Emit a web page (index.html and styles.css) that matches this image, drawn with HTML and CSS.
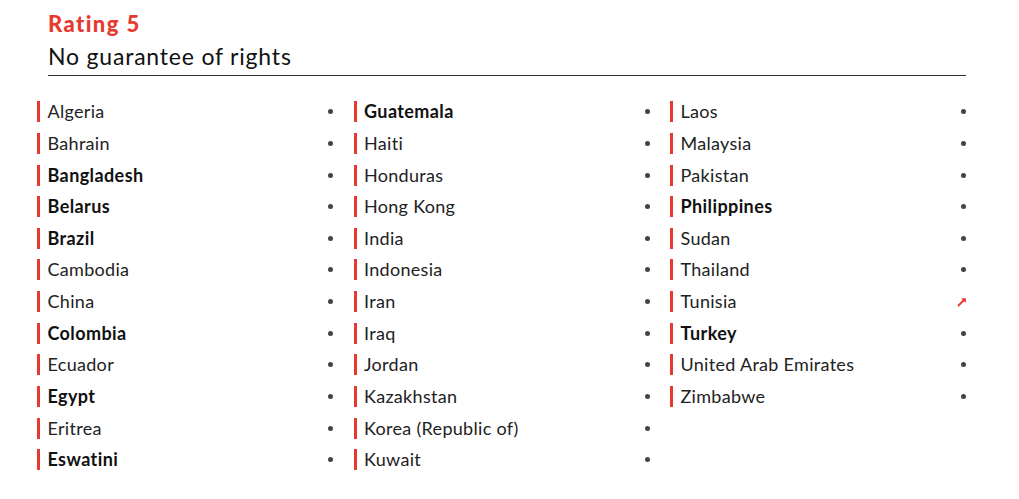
FILE: index.html
```html
<!DOCTYPE html>
<html lang="en">
<head>
<meta charset="utf-8">
<title>Rating 5</title>
<link rel="stylesheet" href="styles.css">
</head>
<body>
<main class="panel">
  <header class="head">
    <h2 class="rating">Rating 5</h2>
    <h3 class="subtitle">No guarantee of rights</h3>
  </header>
  <div class="grid">
    <ul class="col">
      <li class="item"><span class="name">Algeria</span><span class="dot"></span></li>
      <li class="item"><span class="name">Bahrain</span><span class="dot"></span></li>
      <li class="item"><span class="name b">Bangladesh</span><span class="dot"></span></li>
      <li class="item"><span class="name b">Belarus</span><span class="dot"></span></li>
      <li class="item"><span class="name b">Brazil</span><span class="dot"></span></li>
      <li class="item"><span class="name">Cambodia</span><span class="dot"></span></li>
      <li class="item"><span class="name">China</span><span class="dot"></span></li>
      <li class="item"><span class="name b">Colombia</span><span class="dot"></span></li>
      <li class="item"><span class="name">Ecuador</span><span class="dot"></span></li>
      <li class="item"><span class="name b">Egypt</span><span class="dot"></span></li>
      <li class="item"><span class="name">Eritrea</span><span class="dot"></span></li>
      <li class="item"><span class="name b">Eswatini</span><span class="dot"></span></li>
    </ul>
    <ul class="col">
      <li class="item"><span class="name b">Guatemala</span><span class="dot"></span></li>
      <li class="item"><span class="name">Haiti</span><span class="dot"></span></li>
      <li class="item"><span class="name">Honduras</span><span class="dot"></span></li>
      <li class="item"><span class="name">Hong Kong</span><span class="dot"></span></li>
      <li class="item"><span class="name">India</span><span class="dot"></span></li>
      <li class="item"><span class="name">Indonesia</span><span class="dot"></span></li>
      <li class="item"><span class="name">Iran</span><span class="dot"></span></li>
      <li class="item"><span class="name">Iraq</span><span class="dot"></span></li>
      <li class="item"><span class="name">Jordan</span><span class="dot"></span></li>
      <li class="item"><span class="name">Kazakhstan</span><span class="dot"></span></li>
      <li class="item"><span class="name">Korea (Republic of)</span><span class="dot"></span></li>
      <li class="item"><span class="name">Kuwait</span><span class="dot"></span></li>
    </ul>
    <ul class="col">
      <li class="item"><span class="name">Laos</span><span class="dot"></span></li>
      <li class="item"><span class="name">Malaysia</span><span class="dot"></span></li>
      <li class="item"><span class="name">Pakistan</span><span class="dot"></span></li>
      <li class="item"><span class="name b">Philippines</span><span class="dot"></span></li>
      <li class="item"><span class="name">Sudan</span><span class="dot"></span></li>
      <li class="item"><span class="name">Thailand</span><span class="dot"></span></li>
      <li class="item"><span class="name">Tunisia</span><svg class="arrow" width="10" height="10" viewBox="0 0 10 10"><path d="M1.5 8.5 L7.5 2.5" stroke="#e8392f" stroke-width="1.8" stroke-linecap="round"/><path d="M4 1.2 H8.8 V6 Z" fill="#e8392f"/></svg></li>
      <li class="item"><span class="name b">Turkey</span><span class="dot"></span></li>
      <li class="item"><span class="name">United Arab Emirates</span><span class="dot"></span></li>
      <li class="item"><span class="name">Zimbabwe</span><span class="dot"></span></li>
    </ul>
  </div>
</main>
</body>
</html>
```
FILE: styles.css
```css
* { box-sizing: border-box; }
html, body { margin: 0; padding: 0; background: #fff; }
body {
  font-family: Lato, "Open Sans", "Liberation Sans", sans-serif;
  color: #222;
  font-variant-ligatures: none;
}

.panel {
  width: 1019px;
  padding: 10px 0 0 37px;
}
.head {
  margin-left: 11px;
  width: 918px;
  border-bottom: 1px solid #333;
  padding-bottom: 4px;
}
.rating {
  margin: 0;
  font-size: 22px;
  line-height: 28px;
  font-weight: 900;
  letter-spacing: 1.4px;
  color: #e8392f;
}
.subtitle {
  margin: 3px 0 0;
  font-size: 23px;
  line-height: 30px;
  font-weight: 400;
  letter-spacing: 0.8px;
  color: #111;
}
.grid {
  display: grid;
  grid-template-columns: 297px 297px 297px;
  column-gap: 19.5px;
  margin-top: 20px;
}
.col {
  list-style: none;
  margin: 0;
  padding: 0;
}
.item {
  display: flex;
  align-items: center;
  justify-content: space-between;
  height: 31.64px;
}
.name {
  border-left: 3.5px solid #e8392f;
  padding-left: 7.5px;
  font-size: 18px;
  line-height: 21px;
  letter-spacing: 0.3px;
  color: #222;
}
.name.b { font-weight: 700; color: #111; letter-spacing: 0.4px; }
.dot {
  width: 5px;
  height: 5px;
  border-radius: 50%;
  background: #444;
  margin-right: 1px;
}
.arrow { display: block; }
```
